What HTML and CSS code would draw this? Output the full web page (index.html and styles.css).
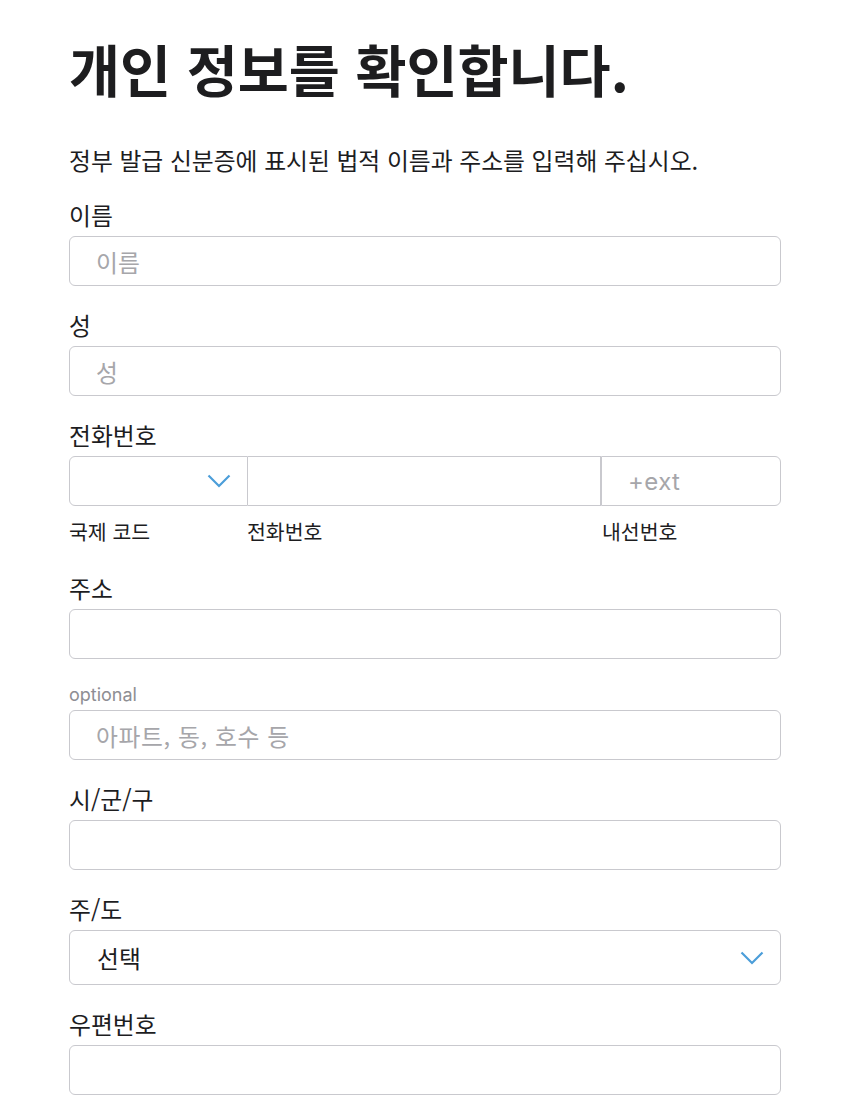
FILE: index.html
```html
<!DOCTYPE html>
<html lang="ko">
<head>
<meta charset="utf-8">
<title>개인 정보를 확인합니다.</title>
<link rel="stylesheet" href="styles.css">
</head>
<body>
<main class="page">
  <h1 class="title">개인 정보를 확인합니다.</h1>
  <p class="intro">정부 발급 신분증에 표시된 법적 이름과 주소를 입력해 주십시오.</p>

  <div class="field">
    <label class="label">이름</label>
    <input class="input" type="text" placeholder="이름">
  </div>

  <div class="field">
    <label class="label">성</label>
    <input class="input" type="text" placeholder="성">
  </div>

  <div class="field field-phone">
    <label class="label">전화번호</label>
    <div class="phone-row">
      <div class="phone-code">
        <svg class="chev" width="24" height="14" viewBox="0 0 24 14"><path d="M1.5 1.5 L12 12 L22.5 1.5" fill="none" stroke="#4c9ed9" stroke-width="2.2"/></svg>
      </div>
      <input class="phone-num" type="text">
      <input class="phone-ext" type="text" placeholder="+ext">
    </div>
    <div class="phone-sub">
      <span class="sub sub-code">국제 코드</span>
      <span class="sub sub-num">전화번호</span>
      <span class="sub sub-ext">내선번호</span>
    </div>
  </div>

  <div class="field">
    <label class="label">주소</label>
    <input class="input" type="text">
  </div>

  <div class="field">
    <label class="label-optional">optional</label>
    <input class="input input-apt" type="text" placeholder="아파트, 동, 호수 등">
  </div>

  <div class="field">
    <label class="label">시/군/구</label>
    <input class="input" type="text">
  </div>

  <div class="field">
    <label class="label">주/도</label>
    <div class="select">
      <span class="select-text">선택</span>
      <svg class="chev" width="24" height="14" viewBox="0 0 24 14"><path d="M1.5 1.5 L12 12 L22.5 1.5" fill="none" stroke="#4c9ed9" stroke-width="2.2"/></svg>
    </div>
  </div>

  <div class="field">
    <label class="label">우편번호</label>
    <input class="input" type="text">
  </div>
</main>
<div class="fade"></div>
</body>
</html>
```

FILE: styles.css
```css
* { box-sizing: border-box; }

html, body {
  margin: 0;
  padding: 0;
  background: #ffffff;
}

body {
  font-family: "Noto Sans CJK KR", "Noto Sans", sans-serif;
  color: #1d1d1f;
  min-height: 1116px;
  position: relative;
}

.page {
  width: 712px;
  margin-left: 69px;
  padding-top: 36px;
}

.title {
  margin: 0;
  font-size: 55.5px;
  font-weight: 700;
  line-height: 64px;
  letter-spacing: 0;
}

.intro {
  margin: 45px 0 26px 0;
  font-size: 23.8px;
  line-height: 30px;
  font-weight: 400;
}

.field {
  margin-bottom: 25px;
}

.label {
  display: block;
  font-size: 23.8px;
  line-height: 28px;
  margin-bottom: 7px;
}

.label-optional {
  display: block;
  font-family: Inter, "Noto Sans", sans-serif;
  font-size: 18px;
  line-height: 22px;
  color: #8e8e93;
  margin-bottom: 4px;
}

.input {
  display: block;
  width: 100%;
  height: 50px;
  border: 1.5px solid #c9c9ce;
  border-radius: 6px;
  padding: 0 26px;
  font-family: inherit;
  font-size: 23.8px;
  color: #1d1d1f;
  background: #fff;
  outline: none;
}

.input-apt {
  letter-spacing: 0.6px;
}

.input::placeholder,
.phone-ext::placeholder {
  color: #a6a6aa;
}

.phone-row {
  display: flex;
  height: 50px;
}

.phone-code {
  width: 179px;
  border: 1.5px solid #c9c9ce;
  border-radius: 6px 0 0 6px;
  display: flex;
  align-items: center;
  justify-content: flex-end;
  padding-right: 16px;
}

.phone-num {
  flex: 1;
  border: 1.5px solid #c9c9ce;
  border-left: none;
  border-radius: 0;
  outline: none;
  font-family: inherit;
  font-size: 23.8px;
  background: #fff;
}

.phone-ext {
  width: 180px;
  border: 1.5px solid #c9c9ce;
  border-radius: 0 6px 6px 0;
  outline: none;
  font-family: Inter, "Noto Sans", sans-serif;
  font-size: 24px;
  letter-spacing: 0.4px;
  padding: 0 0 0 26px;
  background: #fff;
}

.phone-sub {
  display: flex;
  margin-top: 12px;
  font-size: 20.5px;
  line-height: 26px;
}

.sub-code { width: 178px; }
.sub-num { flex: 1; }
.sub-ext { width: 179px; }

.field-phone { margin-bottom: 30px; }

.select {
  height: 55px;
  border: 1.5px solid #c9c9ce;
  border-radius: 6px;
  display: flex;
  align-items: center;
  justify-content: space-between;
  padding: 0 16px 0 27px;
}

.select-text {
  font-size: 23.8px;
}

.fade {
  position: absolute;
  left: 0;
  right: 0;
  top: 1086px;
  height: 30px;
  background: linear-gradient(#ffffff, #f7f7f7);
  pointer-events: none;
  z-index: -1;
}
```
